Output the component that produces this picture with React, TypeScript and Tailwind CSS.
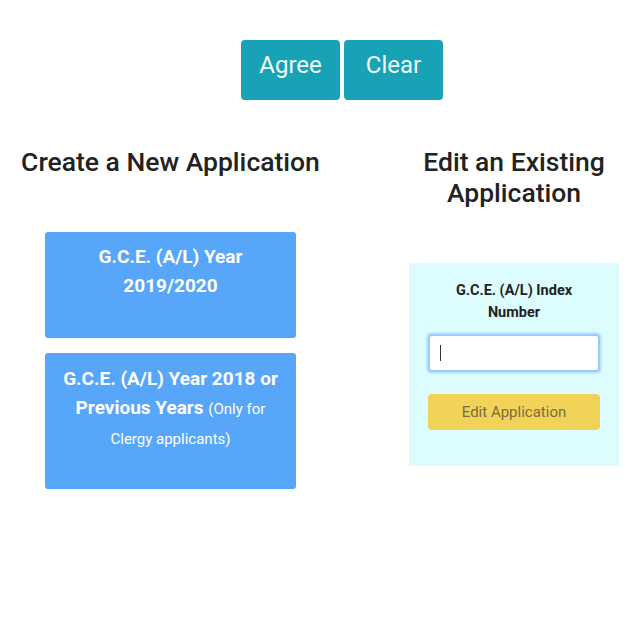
import React from "react";

export default function App() {
  return (
    <div className="w-[640px] h-[640px] bg-white text-[#212529]" style={{ fontFamily: "Roboto, 'Liberation Sans', sans-serif" }}>
      <div className="flex gap-[4px] pl-[241px] pt-[40px]">
        <button className="w-[99px] h-[60px] rounded-[4px] bg-[#18a2b6] text-[#f2fbfc] text-[24px] leading-none pb-[10px]">Agree</button>
        <button className="w-[99px] h-[60px] rounded-[4px] bg-[#18a2b6] text-[#f2fbfc] text-[24px] leading-none pb-[10px]">Clear</button>
      </div>
      <div className="flex pt-[46px]">
        <div className="w-[341px] flex flex-col items-center">
          <h2 className="text-[26.5px] leading-[31px] font-medium text-center text-[#222] whitespace-nowrap">Create a New Application</h2>
          <div className="mt-[55px] w-[251px] flex flex-col gap-[15px]">
            <div className="h-[106px] rounded-[3px] bg-[#58a6f9] px-[15px] pt-[10px] text-center text-white text-[19px] leading-[29px] font-bold">
              G.C.E. (A/L) Year 2019/2020
            </div>
            <div className="h-[136px] rounded-[3px] bg-[#58a6f9] px-[12px] pt-[11px] text-center text-white text-[19px] leading-[29px] font-bold">
              G.C.E. (A/L) Year 2018 or Previous Years{" "}
              <span className="font-normal text-[15px] leading-[28px]">(Only for Clergy applicants)</span>
            </div>
          </div>
        </div>
        <div className="w-[299px] flex flex-col">
          <h2 className="w-[210px] ml-[68px] text-[26.5px] leading-[31px] font-medium text-center text-[#222]">Edit an Existing Application</h2>
          <div className="ml-[68px] mt-[55px] w-[210px] h-[203px] bg-[#dcfcff] px-[19px] pt-[17px] flex flex-col">
            <div className="px-[14px] text-center text-[14.5px] leading-[22px] font-bold text-[#222]">G.C.E. (A/L) Index Number</div>
            <div className="mt-[10px] h-[38px] rounded-[4px] bg-white border-2 border-[#9ccbf7] shadow-[0_0_0_2px_rgba(128,189,255,0.35)] flex items-center pl-[10px]">
              <div className="w-[1px] h-[16px] bg-[#333]" />
            </div>
            <button className="mt-[22px] h-[36px] rounded-[4px] bg-[#f2d35a] text-[15px] text-[#7d6c3c]">Edit Application</button>
          </div>
        </div>
      </div>
    </div>
  );
}
